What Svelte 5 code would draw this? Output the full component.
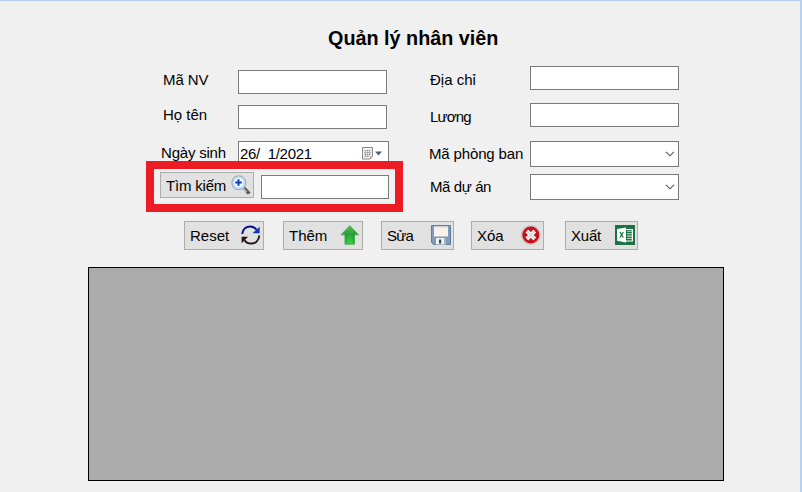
<script>
  const left = [
    { label: 'Mã NV', x: 2, y: 0, gap: 11, ls: -0.1 },
    { label: 'Họ tên', x: 2, y: 0, gap: 12, ls: 0 }
  ];
  const right = [
    { label: 'Địa chỉ', x: 1, y: 4, gap: 13, ls: 0, combo: false },
    { label: 'Lương', x: 1, y: 4, gap: 14, ls: -0.8, combo: false },
    { label: 'Mã phòng ban', x: 0, y: 3, gap: 7, ls: -0.15, combo: true },
    { label: 'Mã dự án', x: 1, y: 3, gap: 0, ls: -0.4, combo: true }
  ];
  const actions = [
    { label: 'Reset', icon: 'reset', w: 80, gap: 19, ls: 0 },
    { label: 'Thêm', icon: 'add', w: 80, gap: 18, ls: 0 },
    { label: 'Sửa', icon: 'save', w: 73, gap: 17, ls: -0.8 },
    { label: 'Xóa', icon: 'delete', w: 73, gap: 21, ls: 0 },
    { label: 'Xuất', icon: 'excel', w: 73, gap: 0, ls: -0.2 }
  ];
</script>

<main class="window">
  <h1>Quản lý nhân viên</h1>
  <div class="form">
    <div class="left">
      {#each left as f}
        <div class="row" style="margin-bottom:{f.gap}px">
          <span class="label" style="padding-left:{f.x}px;margin-top:{f.y}px;letter-spacing:{f.ls}px">{f.label}</span>
          <div class="box"></div>
        </div>
      {/each}
      <div class="row date-row">
        <span class="label birth">Ngày sinh</span>
        <div class="box date">
          <span class="date-text">26/&nbsp; 1/2021</span>
          <svg width="22" height="14" viewBox="0 0 22 14">
            <path d="M1.5 .5h10v9l-2.5 2.5h-7.5z" fill="#f5f3f2" stroke="#8a8583" />
            <path d="M3 3.5h7M3 5.5h7M3 7.5h7M3 9.5h5M4.5 3v7M6.5 3v7M8.5 3v6" stroke="#aaa6a5" stroke-width=".8" />
            <path d="M9 12v-2.5h2.5z" fill="#aaa" />
            <path d="M14 4.5h7l-3.5 4z" fill="#44618c" />
          </svg>
        </div>
      </div>
      <div class="search">
        <button class="find">
          <span>Tìm kiếm</span>
          <svg width="20" height="20" viewBox="0 0 20 20">
            <path d="M12.5 12.5l5.5 6" stroke="#b8b8b8" stroke-width="4" />
            <path d="M13.5 12.5l5.5 5.8M15.5 17l2 2" stroke="#4c4c4c" stroke-width="1.4" />
            <circle cx="7.8" cy="7.7" r="6.9" fill="#eef7ff" stroke="#9aabba" stroke-width="1.2" />
            <circle cx="7.8" cy="7.7" r="5.6" fill="none" stroke="#b9dbfa" stroke-width="1.4" />
            <path d="M7.5 4.2v6.6M4.2 7.5h6.6" stroke="#123fbf" stroke-width="2" />
          </svg>
        </button>
        <div class="box query"></div>
      </div>
      <div class="highlight"></div>
    </div>
    <div class="right">
      {#each right as f}
        <div class="row" style="margin-bottom:{f.gap}px">
          <span class="label" style="padding-left:{f.x}px;margin-top:{f.y}px;letter-spacing:{f.ls}px">{f.label}</span>
          <div class="box" class:combo={f.combo}>
            {#if f.combo}
              <svg width="10" height="6" viewBox="0 0 10 6"><path d="M1 .8l4 4 4-4" fill="none" stroke="#555" stroke-width="1.1" /></svg>
            {/if}
          </div>
        </div>
      {/each}
    </div>
  </div>

  <div class="actions">
    {#each actions as a}
      <button style="width:{a.w}px;margin-right:{a.gap}px">
        <span style="letter-spacing:{a.ls}px">{a.label}</span>
        <svg width="20" height="20" viewBox="0 0 20 20">
          {#if a.icon === 'reset'}
            <path d="M1.2 9C1.7 3.7 5.5 1.4 9.2 1.4c2.8 0 4.8 1.2 6.3 3.4" fill="none" stroke="#090d8e" stroke-width="2" />
            <path d="M18.6 1.7v6.5h-7z" fill="#1238a5" />
            <path d="M18.3 10.5c-.5 5.3-4 8.1-8.3 8.1-2.8 0-5-1.3-6.4-3.4" fill="none" stroke="#241713" stroke-width="2" />
            <path d="M.6 18.3v-6.6h6.5z" fill="#241713" />
          {:else if a.icon === 'add'}
            <defs>
              <linearGradient id="leaf" x1="0" y1="0" x2="0" y2="1">
                <stop offset="0" stop-color="#63b75e" /><stop offset=".45" stop-color="#27a136" /><stop offset="1" stop-color="#3bd443" />
              </linearGradient>
            </defs>
            <path d="M9.8 .7l8.7 9.1h-4v9.4h-9.5V9.8h-4z" fill="url(#leaf)" stroke="#45a64a" stroke-width=".9" />
            <path d="M6.1 18V9M13.4 9v9" stroke="#218d2b" stroke-width=".7" />
          {:else if a.icon === 'save'}
            <path d="M.5 .5h19v19H2.5l-2-2z" fill="#7f9bb9" stroke="#607c9c" />
            <path d="M3 1h14v10.5H3z" fill="#fbf1ea" />
            <path d="M3 1h14v1.5H3z" fill="#c8d4e0" />
            <path d="M5 13h10v6.5H5z" fill="#f1f4f6" />
            <path d="M8 14.5h2.2v4H8z" fill="#2e4866" />
            <path d="M13 13h2v6.5h-2z" fill="#a4b4c4" />
          {:else if a.icon === 'delete'}
            <circle cx="9.8" cy="10" r="9.4" fill="#d8d0d0" stroke="#b5adad" stroke-width=".6" />
            <circle cx="9.8" cy="10" r="8.5" fill="#c70f17" />
            <path d="M5.8 6l8 8M13.8 6l-8 8" stroke="#eef3f3" stroke-width="3.9" />
            <path d="M6.2 6.4l7.2 7.2M13.4 6.4l-7.2 7.2" stroke="#cbd9d9" stroke-width="1.2" />
          {:else}
            <path d="M0 0h20v20H0z" fill="#1b7244" />
            <path d="M11 4h7v12.5h-7z" fill="#fff" />
            <path d="M11 5h5.8v10.5H11z" fill="#1b7244" />
            <path d="M12 6.3h5M12 8.7h5M12 11.1h5M12 13.5h5" stroke="#c4dccf" stroke-width="1.1" />
            <path d="M2 4L11 2.5v15L2 15.8z" fill="#fff" />
            <path d="M5 7l3.3 5.5M8.3 7L5 12.5" stroke="#1b7244" stroke-width="1.3" />
          {/if}
        </svg>
      </button>
    {/each}
  </div>
  <div class="grid"></div>
</main>

<style>
  .window {
    box-sizing: border-box;
    width: 802px;
    height: 492px;
    overflow: hidden;
    background: #f0f0f0;
    border-top: 1px solid #b4d0f0;
    border-right: 2px solid #b9d1ea;
    font: 15px/20px "Liberation Sans", Arial, sans-serif;
    color: #000;
  }
  h1 {
    box-sizing: border-box;
    height: 65px;
    margin: 0;
    padding: 24px 0 0 328px;
    font-size: 19.8px;
    line-height: 26px;
    font-weight: bold;
    white-space: nowrap;
  }
  .form { display: flex; height: 155px; padding-left: 161px; }
  .left { position: relative; width: 268px; padding-top: 4px; box-sizing: border-box; }
  .row { display: flex; align-items: flex-start; }
  .label { box-sizing: border-box; width: 77px; flex: none; white-space: nowrap; }
  .right .label { width: 101px; }
  .box {
    box-sizing: border-box;
    width: 149px;
    height: 24px;
    flex: none;
    background: #fff;
    border: 1px solid #7a7a7a;
  }
  .date-row { height: 31px; }
  .birth { margin-top: 2px; letter-spacing: -.2px; }
  .date { display: flex; justify-content: space-between; width: 151px; padding: 2px 5px 0 1px; }
  .date-text { letter-spacing: -.3px; }
  .date svg { margin-top: 3px; }
  .combo { display: flex; justify-content: flex-end; align-items: center; height: 26px; padding-right: 3px; }
  .search { display: flex; align-items: flex-start; margin-left: -1px; gap: 7px; }
  .query { width: 128px; margin-top: 3px; }
  .highlight {
    position: absolute;
    left: -15px;
    top: 95px;
    width: 257px;
    height: 51px;
    box-sizing: border-box;
    border: 8px solid #ed1c24;
  }
  button {
    box-sizing: border-box;
    display: flex;
    justify-content: space-between;
    align-items: flex-start;
    height: 29px;
    padding: 4px 2px 0 5px;
    border: 1px solid #adadad;
    background: #e1e1e1;
    font: inherit;
    color: inherit;
    white-space: nowrap;
  }
  button svg { flex: none; margin-top: -1px; }
  .find { width: 94px; height: 26px; padding-top: 3px; letter-spacing: -.2px; }
  .actions { display: flex; padding-left: 184px; height: 46px; }
  .grid {
    box-sizing: border-box;
    width: 636px;
    height: 214px;
    margin-left: 88px;
    border: 1px solid #000;
    background: #ababab;
  }
</style>
